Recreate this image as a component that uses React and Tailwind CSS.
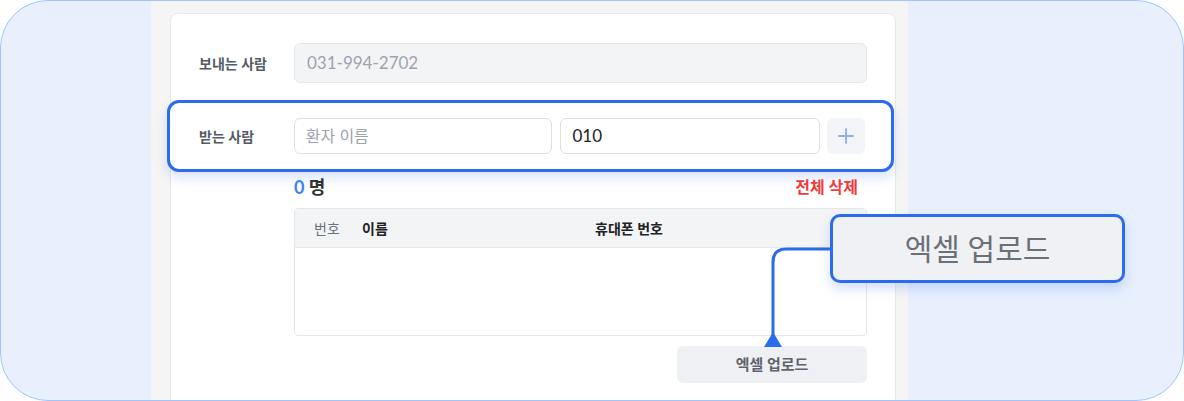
import { Plus } from 'lucide-react';

const FONT = "font-['Lato','Noto_Sans_CJK_KR',sans-serif]";

export default function App() {
  return (
    <div className={`relative w-[1184px] h-[401px] overflow-hidden rounded-[48px] border border-[#9fc5fb] bg-[#e8f0fe] ${FONT}`}>
      <div className="ml-[150px] h-full w-[757px] bg-[#f5f5f5] pt-[12px] pl-[19px]">
        <div className="h-[400px] w-[726px] rounded-t-[8px] border border-[#e8e8e8] bg-white">
          {/* sender */}
          <div className="mt-[29px] flex items-center pr-[28px]">
            <div className="w-[123px] pl-[28px] text-[14px] font-semibold text-[#555b64]">보내는 사람</div>
            <div className="flex h-[40px] flex-1 items-center rounded-[6px] border border-[#e5e7eb] bg-[#f3f4f6] px-[12px] text-[17px] text-[#9ca3af]">
              031-994-2702
            </div>
          </div>

          {/* recipient, highlighted */}
          <div className="-ml-[4px] mt-[17px] flex h-[72px] w-[727px] items-center rounded-[12px] border-[3px] border-[#2a6cec] bg-white pr-[26px] shadow-[0_6px_12px_rgba(37,99,235,0.18)]">
            <div className="w-[124px] pl-[29px] text-[14px] font-semibold text-[#555b64]">받는 사람</div>
            <div className="flex h-[36px] w-[259px] items-center rounded-[6px] border border-[#dcdfe3] px-[11px] text-[16px] text-[#9ca3af]">
              환자 이름
            </div>
            <div className="ml-[8px] flex h-[36px] w-[260px] items-center rounded-[6px] border border-[#dcdfe3] px-[11px] text-[17px] text-[#222]">
              010
            </div>
            <div className="ml-[7px] flex h-[36px] w-[38px] items-center justify-center rounded-[6px] bg-[#f3f5f8] text-[#8aaef5]">
              <Plus size={24} strokeWidth={1.8} />
            </div>
          </div>

          {/* count */}
          <div className="ml-[123px] mr-[37px] mt-[4px] flex h-[22px] items-center justify-between">
            <div className="text-[18px] font-bold">
              <span className="text-[#3b82f6]">0</span> <span className="text-[#333]">명</span>
            </div>
            <div className="text-[16px] font-bold text-[#ef3b3b]">전체 삭제</div>
          </div>

          {/* table */}
          <div className="ml-[123px] mr-[28px] mt-[10px] h-[128px] overflow-hidden rounded-[4px] border border-[#e6e7e9]">
            <div className="flex h-[39px] items-center border-b border-[#e6e7e9] bg-[#f3f4f6] text-[14px]">
              <div className="w-[67px] pl-[19px] text-[#6b7280]">번호</div>
              <div className="w-[233px] font-semibold text-[#222]">이름</div>
              <div className="font-semibold text-[#222]">휴대폰 번호</div>
            </div>
          </div>

          {/* upload button */}
          <div className="mr-[28px] mt-[10px] flex justify-end">
            <div className="flex h-[37px] w-[190px] items-center justify-center rounded-[6px] bg-[#eef0f3] text-[15px] font-semibold text-[#5f646c]">
              엑셀 업로드
            </div>
          </div>
        </div>
      </div>

      {/* annotation connector */}
      <svg className="absolute left-0 top-0" width="1184" height="401" viewBox="0 0 1184 401">
        <path d="M832 248 H785 Q772 248 772 261 V336" fill="none" stroke="#2a6cec" strokeWidth="3" />
        <path d="M763 346 L781 346 L772 331 Z" fill="#2a6cec" />
      </svg>

      {/* annotation callout */}
      <div className="absolute left-[829px] top-[213px] flex h-[69px] w-[295px] items-center justify-center rounded-[10px] border-[3px] border-[#2a6cec] bg-[#eff1f4] text-[30px] text-[#6b6f76] shadow-[0_6px_12px_rgba(37,99,235,0.2)]">
        엑셀 업로드
      </div>
    </div>
  );
}
